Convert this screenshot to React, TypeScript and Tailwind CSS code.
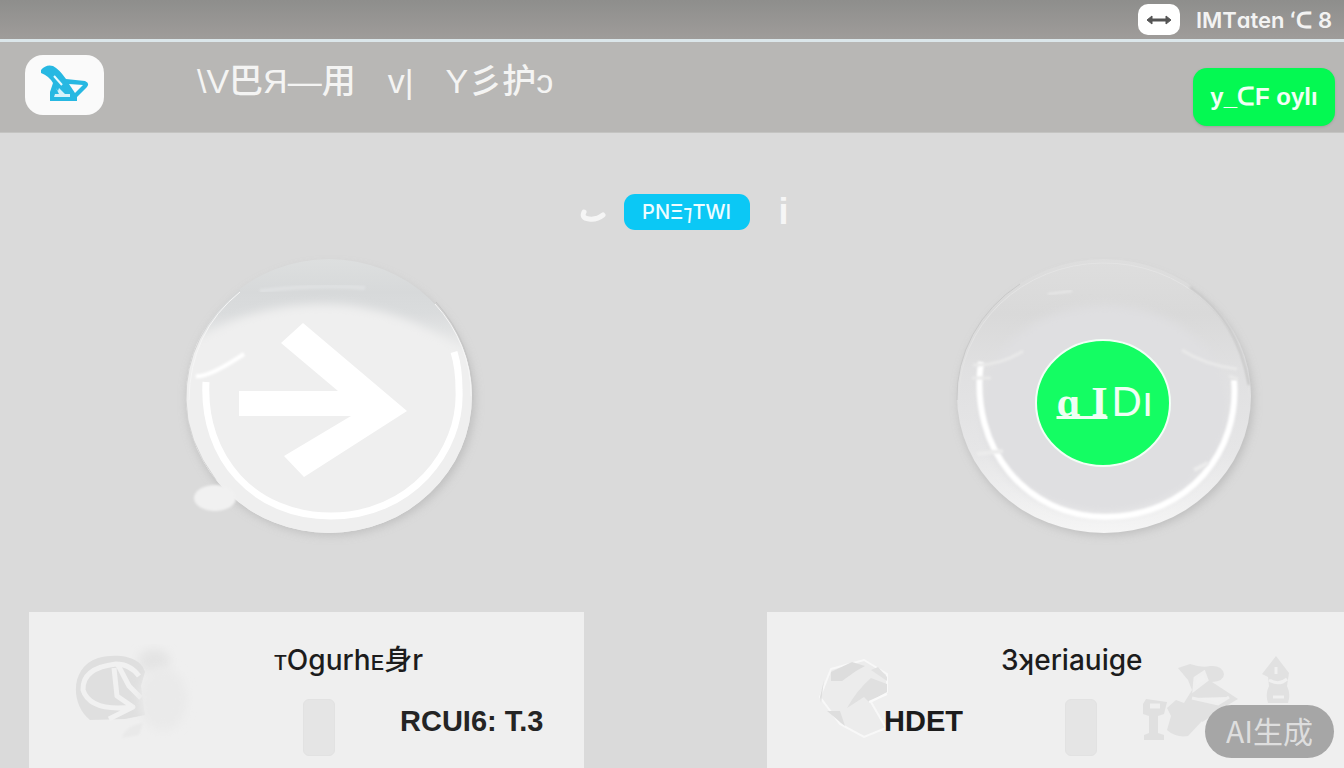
import type {ReactNode} from 'react';

function BirdIcon() {
  return (
    <svg viewBox="0 0 48 38" className="w-12 h-[38px] -translate-y-px" fill="none" aria-hidden="true">
      <path d="M0 5 Q5 -1 12 1 Q18 4 25 14 L44 16 Q49 18 46 22 L36 32 V36 H9 V27 L12 18 Q8 11 0 8Z" fill="#27b8e2" />
      <path d="M28 19 L42 20 L34 28Z" fill="#fbfbfb" />
      <path d="M15 23 L17 26 L18 23 L24 29 H29 V32 H13 L14 29 H18Z" fill="#d5f2fa" />
      <path d="M13 11 L21 20" stroke="#e9fbff" strokeWidth="2" />
    </svg>
  );
}

function ResizeIcon() {
  return (
    <svg viewBox="0 0 26 10" className="w-[26px] h-[10px]" aria-hidden="true">
      <path d="M1 5 L6 1 V4 H20 V1 L25 5 L20 9 V6 H6 V9Z" fill="#555555" stroke="#555555" />
    </svg>
  );
}

function ArrowDial() {
  return (
    <svg viewBox="170 250 320 300" className="w-[320px] h-[300px]" fill="none" aria-hidden="true">
      <defs>
        <linearGradient id="arrowFill" x1="0" y1="0" x2="0" y2="1">
          <stop offset="0" stopColor="#dddfdf" />
          <stop offset="0.12" stopColor="#d7d9da" />
          <stop offset="0.2" stopColor="#dadcdd" />
          <stop offset="0.36" stopColor="#eeeeee" />
          <stop offset="1" stopColor="#f2f2f2" />
        </linearGradient>
        <filter id="soft" x="-20%" y="-20%" width="140%" height="140%">
          <feGaussianBlur stdDeviation="5" />
        </filter>
        <filter id="softer" x="-20%" y="-20%" width="140%" height="140%">
          <feGaussianBlur stdDeviation="1" />
        </filter>
        <clipPath id="arrowClip">
          <ellipse cx="329" cy="396" rx="143" ry="137" />
        </clipPath>
      </defs>
      <ellipse cx="331" cy="400" rx="144" ry="135" fill="#b4b4b4" opacity="0.7" filter="url(#soft)" />
      <ellipse cx="329" cy="396" rx="143" ry="137" fill="url(#arrowFill)" />
      <g clipPath="url(#arrowClip)">
        <path d="M180 352 Q240 304 325 304 Q400 304 475 358 V540 H180Z" fill="#efefef" filter="url(#soft)" />
        <path d="M260 291 Q320 284 365 288" stroke="#dfe1e2" strokeWidth="4" filter="url(#softer)" />
      </g>
      <path d="M240 290 A143 137 0 0 0 186 400 Q186 440 216 480" stroke="#d4d4d4" strokeWidth="1" />
      <path d="M240 292 Q190 332 189 400 M435 304 A143 137 0 0 1 471 396" stroke="#f6f6f6" strokeWidth="1" />
      <path d="M436 302 Q474 345 473 400" stroke="#c6c6c6" strokeWidth="1" />
      <ellipse cx="215" cy="498" rx="21" ry="13" fill="#f1f1f1" filter="url(#softer)" />
      <path d="M206 382 C202 458 254 516 331 516 C410 516 462 452 459 390 Q459 368 454 352" stroke="#fff" strokeWidth="7" />
      <path d="M196 376 Q208 378 244 354" stroke="#fff" strokeWidth="4" filter="url(#softer)" />
      <path d="M303 323 L407 411 L304 477 L284 456 L351 416 H239 V391 H338 L281 343Z" fill="#fff" />
    </svg>
  );
}

function GlassDial() {
  return (
    <svg viewBox="940 250 330 300" className="w-[330px] h-[300px]" fill="none" aria-hidden="true">
      <defs>
        <linearGradient id="glassFill" x1="0" y1="0" x2="0" y2="1">
          <stop offset="0" stopColor="#dedede" />
          <stop offset="0.2" stopColor="#d9d9d9" />
          <stop offset="0.4" stopColor="#e0e0e1" />
          <stop offset="0.7" stopColor="#e6e6e7" />
          <stop offset="1" stopColor="#f5f5f5" />
        </linearGradient>
      </defs>
      <ellipse cx="1106" cy="401" rx="147" ry="134" fill="#b0b0b0" opacity="0.7" filter="url(#soft)" />
      <ellipse cx="1104" cy="396" rx="147" ry="137" fill="url(#glassFill)" />
      <path d="M957 400 A147 137 0 0 1 1020 284" stroke="#c9c9c9" strokeWidth="1" />
      <path d="M959 400 A145 135 0 0 1 1249 396" stroke="#e4e4e4" strokeWidth="1" />
      <path d="M1190 287 Q1238 320 1249 385" stroke="#c2c2c2" strokeWidth="2" filter="url(#softer)" />
      <ellipse cx="1105" cy="410" rx="124" ry="105" fill="#dfdfe1" filter="url(#soft)" />
      <path d="M981 362 C969 450 1028 517 1105 517 C1190 517 1240 450 1234 380" stroke="#fff" strokeWidth="6" filter="url(#softer)" />
      <path d="M973 365 Q1000 366 1023 351 M1182 350 Q1205 365 1237 369 M972 378 H991 M1229 376 L1238 379" stroke="#e9e9e9" strokeWidth="3" filter="url(#softer)" />
      <path d="M977 454 L1003 451 M1194 470 L1208 463" stroke="#ececec" strokeWidth="4" filter="url(#softer)" />
      <path d="M1048 294 L1072 291" stroke="#e8e8e8" strokeWidth="2" filter="url(#softer)" />
      <ellipse cx="1103" cy="403" rx="67" ry="63" fill="#14fd63" stroke="#f2fff6" strokeWidth="2" />
    </svg>
  );
}

function BadgeArt() {
  return (
    <svg viewBox="75 640 125 100" className="w-[125px] h-[100px]" fill="none" aria-hidden="true">
      <ellipse cx="154" cy="661" rx="16" ry="12" fill="#e4e4e4" filter="url(#soft)" />
      <path d="M90 720 C70 704 70 667 98 658 C120 652 142 658 145 672 L141 686 L145 715 L125 719Z" fill="#dfdfdf" />
      <path d="M139 676 Q130 664 116 664 Q82 668 83 690 Q90 712 133 707 L109 719 M114 668 L117 696 L133 707 M118 665 L129 686 L141 698" stroke="#f1f1f1" strokeWidth="5" strokeLinejoin="round" />
      <ellipse cx="163" cy="699" rx="24" ry="32" fill="#eaeaea" filter="url(#soft)" />
      <path d="M122 738 Q125 726 143 723 L139 735Z" fill="#e9e9e9" filter="url(#softer)" />
    </svg>
  );
}

function BallArt() {
  return (
    <svg viewBox="817 655 75 85" className="w-[75px] h-[85px]" fill="none" aria-hidden="true">
      <path d="M831 669 L864 660 L887 674 V692 L871 702 L886 728 L864 737 L840 724 L820 697Z" fill="#ececec" stroke="#f8f8f8" strokeWidth="2" />
      <path d="M831 672 L852 662 L865 666 L856 671 L842 681 H831Z" fill="#dddddd" />
      <path d="M871 678 L887 684 V692 L869 702 L864 697 L847 708 Q857 690 871 678Z" fill="#e0e0e0" />
      <path d="M827 711 H840 L845 726Z M820 697 L824 680 L821 703Z" fill="#dedede" />
      <path d="M871 670 L878 667 L887 677 V681Z" fill="#e2e2e2" />
      <path d="M869 702 L887 694" stroke="#fafafa" strokeWidth="2" />
    </svg>
  );
}

function FiguresArt() {
  return (
    <svg viewBox="1140 652 154 94" className="w-[154px] h-[94px]" fill="none" aria-hidden="true">
      <path d="M1178 668 L1190 664 Q1202 668 1210 666 Q1222 665 1224 674 Q1224 681 1212 682 L1238 699 L1216 712 Q1200 725 1202 721 L1188 736 Q1176 738 1167 730 L1171 716 L1167 708 L1176 700 L1184 703 L1192 690 L1188 680Z" fill="#e1e1e1" />
      <path d="M1195 678 L1204 672 L1207 680 L1194 690Z M1192 698 L1218 704 L1229 697" stroke="#efefef" strokeWidth="3" fill="#f0f0f0" />
      <path d="M1143 704 L1146 699 L1167 702 L1164 714 L1158 716 V733 L1164 735 V740 H1144 V735 L1149 733 V716 L1143 714Z" fill="#e0e0e0" />
      <path d="M1150 706 H1160" stroke="#efefef" strokeWidth="5" />
      <path d="M1276 656 L1289 673 L1287 686 Q1291 694 1288 703 H1268 Q1265 694 1269 686 L1268 677 L1262 674Z" fill="#e1e1e1" />
      <path d="M1269 680 Q1279 686 1287 679 M1273 697 H1284 M1276 667 V674" stroke="#f0f0f0" strokeWidth="3" />
    </svg>
  );
}

function Slot() {
  return <div className="w-8 h-[57px] shrink-0 rounded-md bg-[#e5e5e5] border border-[#e2e2e2]" />;
}

function CardTitle({children}: {children: ReactNode}) {
  return (
    <h2 className="font-['Inter','Noto_Sans_CJK_SC',sans-serif] text-[28px] leading-8 font-medium text-[#1c1c1c] whitespace-nowrap">
      {children}
    </h2>
  );
}

export default function App() {
  return (
    <div className="min-h-screen flex flex-col relative overflow-hidden bg-[#dadada] font-['Liberation_Sans','Noto_Sans_CJK_SC',sans-serif]">
      {/* Status bar */}
      <div className="h-[42px] flex items-center justify-end gap-4 pr-3 bg-linear-to-b from-[#8e8e8c] to-[#9f9c9a] border-b-3 border-[#dbe6ea]">
        <button type="button" aria-label="Resize" className="w-[42px] h-[31px] flex justify-center items-center rounded-[10px] bg-white">
          <ResizeIcon />
        </button>
        <span className="font-['Inter',sans-serif] text-[22px] leading-7 font-semibold text-[#f3f3f3] whitespace-nowrap">IMTɑten ʻᑕ 8</span>
      </div>

      {/* Header */}
      <header className="h-[91px] flex items-start justify-between pl-[25px] pr-[9px] bg-[#b8b7b5] border-b border-[#c4c4c2]">
        <div className="flex items-start">
          <a href="#home" aria-label="Home" className="mt-[13px] w-[79px] h-[60px] flex items-center justify-center rounded-[18px] bg-[#fafafa]">
            <BirdIcon />
          </a>
          <h1 className="mt-3 ml-[93px] flex gap-8 text-[34px] leading-[54px] font-medium text-[#f4f4f3] whitespace-nowrap">
            <span>\V巴Я—用</span>
            <span>v|</span>
            <span>Y彡护ɔ</span>
          </h1>
        </div>
        <button type="button" className="mt-[26px] w-[142px] h-[58px] rounded-[14px] bg-[#04f952] text-2xl font-bold text-[#f2fff5] shadow-sm whitespace-nowrap">
          y_ᑕF oylı
        </button>
      </header>

      <main className="flex-1 flex flex-col">
        {/* Pager */}
        <div className="mt-[61px] pl-[35px] flex justify-center items-center gap-[18px]">
          <svg viewBox="0 0 26 20" className="w-[26px] h-5" fill="none" aria-hidden="true">
            <path d="M4 10 Q1 16 9 17 Q17 18 23 13" stroke="#f5f5f5" strokeWidth="5" strokeLinecap="round" />
          </svg>
          <button type="button" className="w-[126px] h-9 rounded-[11px] bg-[#0bc8f5] font-['Inter',sans-serif] text-xl font-medium text-[#effcff] whitespace-nowrap">
            PNΞ⁊TWI
          </button>
          <span className="w-8 text-center text-[36px] leading-9 font-bold text-[#f6f6f6]">i</span>
        </div>

        {/* Dials */}
        <div className="mt-5 grid grid-cols-[660fr_206fr_478fr]">
          <div className="col-start-1 flex justify-center">
            <button type="button" aria-label="Next">
              <ArrowDial />
            </button>
          </div>
          <div className="col-start-3 flex justify-center">
            <button type="button" className="grid place-items-center">
              <span className="col-start-1 row-start-1">
                <GlassDial />
              </span>
              <span className="col-start-1 row-start-1 pt-1 flex items-center gap-1 text-[42px] leading-none text-[#effff4]">
                <span className="font-['Liberation_Serif',serif] font-bold underline decoration-3 underline-offset-0">ɑ I</span>
                <span>Dı</span>
              </span>
            </button>
          </div>
        </div>

        {/* Cards */}
        <div className="mt-[62px] flex-1 pl-[29px] grid grid-cols-[555fr_183fr_577fr]">
          <section className="col-start-1 min-h-[156px] bg-[#efefef] flex items-start pl-[46px]">
            <div className="mt-7">
              <BadgeArt />
            </div>
            <div className="mt-8 ml-[74px]">
              <CardTitle>ᴛOgurhᴇ身r</CardTitle>
              <div className="mt-[23px] ml-[29px] flex items-start gap-[65px]">
                <Slot />
                <p className="mt-1 text-[29px] leading-9 font-bold text-[#242424] whitespace-nowrap">RCUI6: T.3</p>
              </div>
            </div>
          </section>
          <section className="col-start-3 min-h-[156px] bg-[#efefef] flex items-start pl-[50px]">
            <div className="mt-[43px] -mr-2">
              <BallArt />
            </div>
            <div className="mt-8 w-[256px] shrink-0">
              <div className="ml-[117px]">
                <CardTitle>3ʞeriauige</CardTitle>
              </div>
              <div className="mt-[23px] flex items-start">
                <p className="mt-1 w-[181px] text-[29px] leading-9 font-bold text-[#1c1c1c]">HDET</p>
                <Slot />
              </div>
            </div>
            <div className="mt-10 shrink-0">
              <FiguresArt />
            </div>
          </section>
        </div>
      </main>

      <div className="absolute right-[10px] bottom-[10px] w-[129px] h-[53px] pb-1 flex items-center justify-center rounded-full bg-[#a6a6a6] text-3xl text-[#dedede] font-['Noto_Sans_CJK_SC',sans-serif] whitespace-nowrap">
        AI生成
      </div>
    </div>
  );
}
